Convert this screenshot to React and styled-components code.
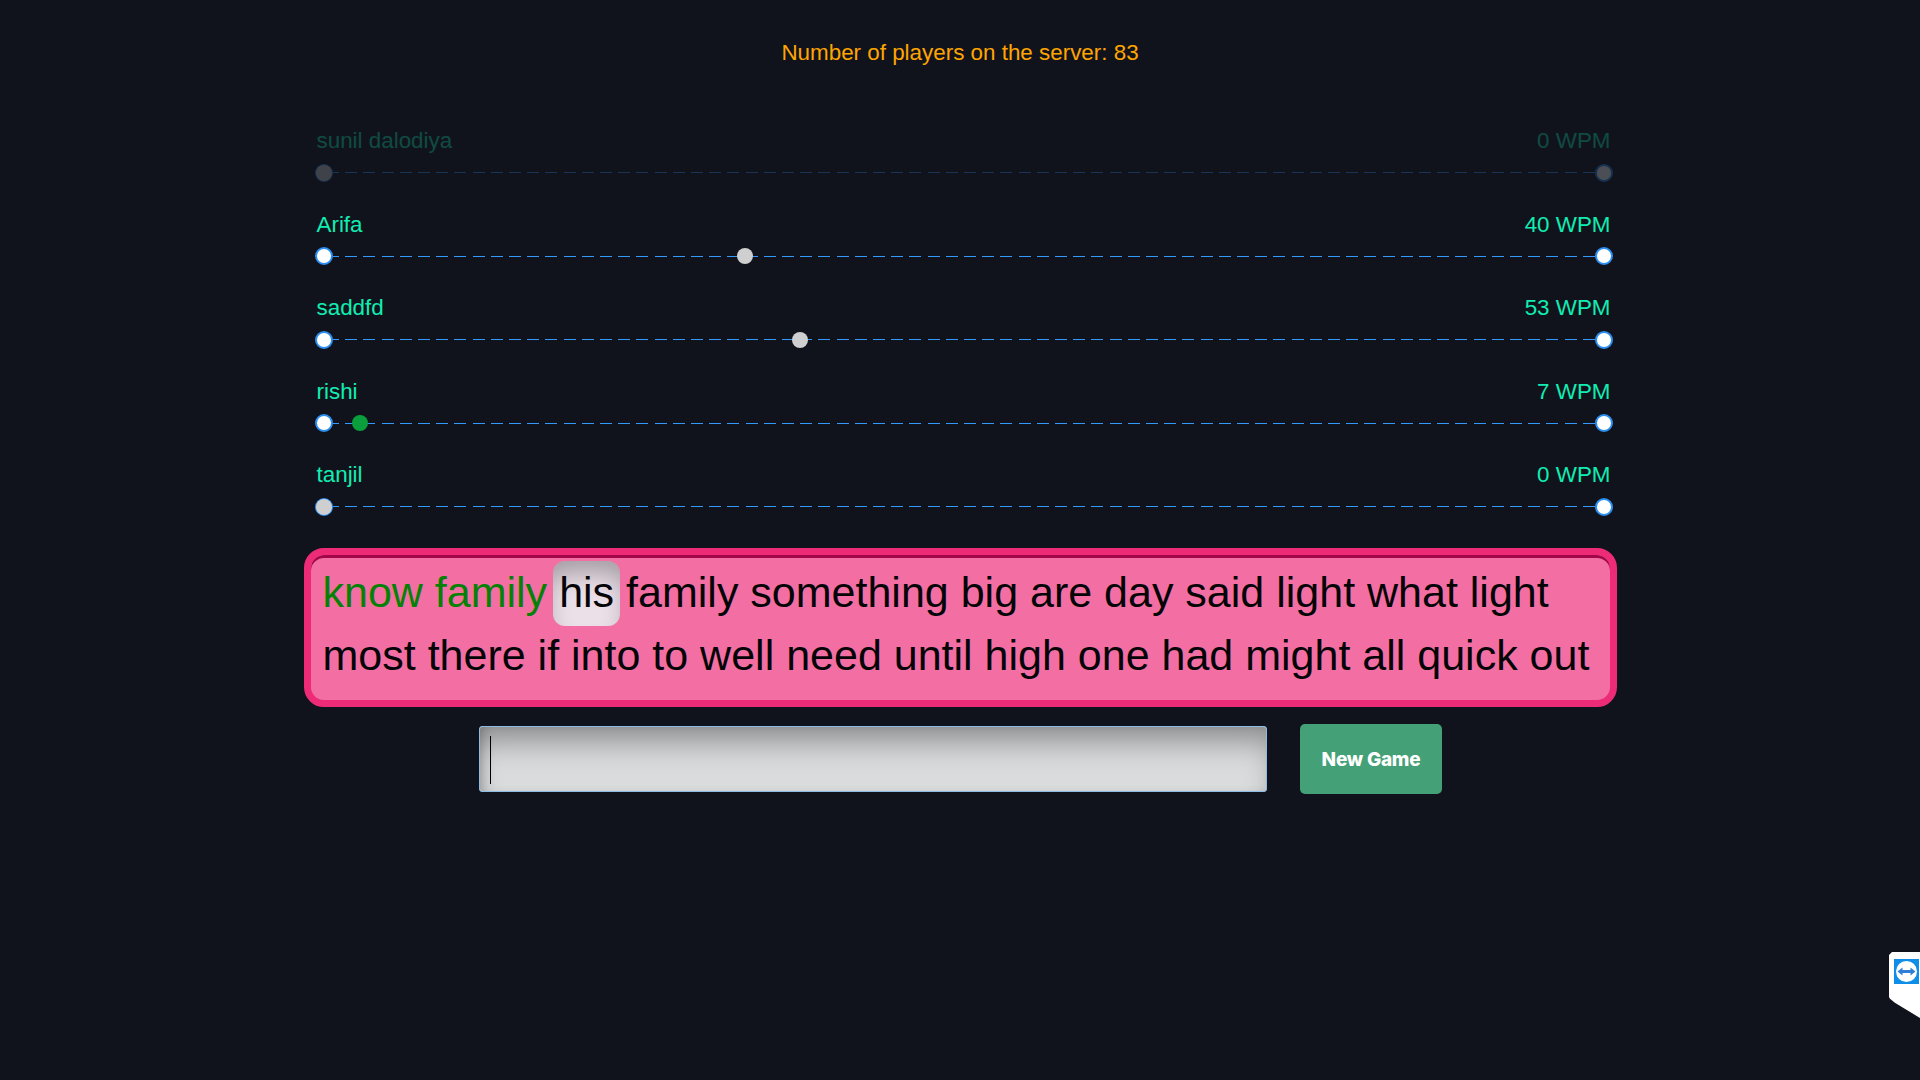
import React from 'react';
import styled, { createGlobalStyle } from 'styled-components';

const players = [
  { name: 'sunil dalodiya', wpm: 0, progress: 0, left: true },
  { name: 'Arifa', wpm: 40, progress: 32.9 },
  { name: 'saddfd', wpm: 53, progress: 37.2 },
  { name: 'rishi', wpm: 7, progress: 2.85, green: true },
  { name: 'tanjil', wpm: 0, progress: 0 },
];

export default function App() {
  return (
    <Page>
      <GlobalStyle />
      <ServerCount>Number of players on the server: 83</ServerCount>
      <RaceList>
        {players.map((p) => (
          <PlayerRow key={p.name} $faded={p.left}>
            <Labels>
              <span>{p.name}</span>
              <span>{p.wpm} WPM</span>
            </Labels>
            <Track>
              <EndDot />
              <Dashes />
              <EndDot />
              <Marker $green={p.green} style={{ left: `calc(9px + (100% - 18px) * ${p.progress / 100})` }} />
            </Track>
          </PlayerRow>
        ))}
      </RaceList>
      <WordBox>
        <Typed>know family</Typed>
        <Current>his</Current>
        family something big are day said light what light most there if into to well need until high one had might all quick out
      </WordBox>
      <InputRow>
        <TypeInput>
          <Caret />
        </TypeInput>
        <NewGame>New Game</NewGame>
      </InputRow>
      <SideWidget>
        <svg width="25" height="25" viewBox="0 0 25 25">
          <rect width="25" height="25" fill="#0e8ee9" />
          <circle cx="12.5" cy="12.5" r="10.5" fill="#fff" />
          <path d="M3.5 12.5 L8.5 8.6 V11 H16.5 V8.6 L21.5 12.5 L16.5 16.4 V14 H8.5 V16.4 Z" fill="#2f7fd6" />
        </svg>
      </SideWidget>
    </Page>
  );
}

const GlobalStyle = createGlobalStyle`
  html, body {
    margin: 0;
    background: #10131c;
  }
`;

const Page = styled.div`
  position: relative;
  height: 1080px;
  overflow: hidden;
  background: #10131c;
  font-family: 'Liberation Sans', Arial, sans-serif;
  display: flex;
  flex-direction: column;
  align-items: center;
`;

const ServerCount = styled.p`
  margin: 40px 0 0;
  color: #ffa500;
  font-size: 22.4px;
  line-height: 26px;
`;

const RaceList = styled.div`
  width: 1298px;
  margin-top: 62px;
  margin-left: 7px;
`;

const PlayerRow = styled.div`
  height: 83.6px;
  opacity: ${(p) => (p.$faded ? 0.25 : 1)};
`;

const Labels = styled.div`
  display: flex;
  justify-content: space-between;
  padding: 0 2px;
  color: #12edb2;
  font-size: 22.4px;
  line-height: 26px;
`;

const Track = styled.div`
  position: relative;
  display: flex;
  align-items: center;
  margin-top: 9.6px;
  height: 18px;
`;

const EndDot = styled.span`
  flex: none;
  width: 18px;
  height: 18px;
  box-sizing: border-box;
  border: 2px solid #2a8ef0;
  border-radius: 50%;
  background: #fff;
`;

const Dashes = styled.span`
  flex: 1;
  height: 1px;
  background: repeating-linear-gradient(90deg, #3399ff 0 12px, transparent 12px 18.2px);
  background-position: -6px 0;
`;

const Marker = styled.span`
  position: absolute;
  top: 1px;
  width: 16px;
  height: 16px;
  margin-left: -8px;
  border-radius: 50%;
  background: ${(p) => (p.$green ? '#0a9e3c' : '#cfcfcf')};
`;

const WordBox = styled.div`
  width: 1313px;
  height: 159px;
  box-sizing: border-box;
  margin-top: 2.4px;
  padding: 5.5px 10px 0 12px;
  border: 7px solid #ee2b77;
  border-radius: 20px;
  background: #f36fa3;
  box-shadow: inset 0 3px 0 #a2074a;
  color: #050508;
  font-size: 43px;
  line-height: 63.5px;
`;

const Typed = styled.span`
  color: #058105;
`;

const Current = styled.span`
  display: inline-block;
  margin: 0 6px -2px;
  padding: 0 6px;
  height: 65px;
  line-height: 63.5px;
  vertical-align: top;
  border-radius: 12px;
  background: #ebdfe8;
  box-shadow: inset 0 18px 24px -6px rgba(0, 0, 0, 0.3);
`;

const InputRow = styled.div`
  display: flex;
  align-items: center;
  gap: 33px;
  margin-top: 17px;
  margin-left: 1px;
`;

const TypeInput = styled.div`
  width: 788px;
  height: 66px;
  box-sizing: border-box;
  padding: 9px 10px;
  border: 1px solid #8fbce4;
  border-radius: 3px;
  background: #dadbdd;
  box-shadow: inset 0 24px 30px -10px rgba(0, 0, 0, 0.36), inset 8px 0 14px -8px rgba(0, 0, 0, 0.3);
`;

const Caret = styled.div`
  width: 1px;
  height: 48px;
  background: #000;
`;

const NewGame = styled.button`
  width: 142px;
  height: 70px;
  border: none;
  border-radius: 5px;
  background: #43a077;
  color: #fff;
  font-family: Inter, sans-serif;
  font-weight: 800;
  font-size: 19px;
  letter-spacing: -0.25px;
`;

const SideWidget = styled.div`
  position: absolute;
  right: 0;
  top: 952px;
  width: 31px;
  height: 66px;
  box-sizing: border-box;
  padding: 7px 0 0 5px;
  background: #fff;
  clip-path: polygon(3px 0, 100% 0, 100% 100%, 19% 77%, 1px 71%, 0 68%, 0 3px);
`;
